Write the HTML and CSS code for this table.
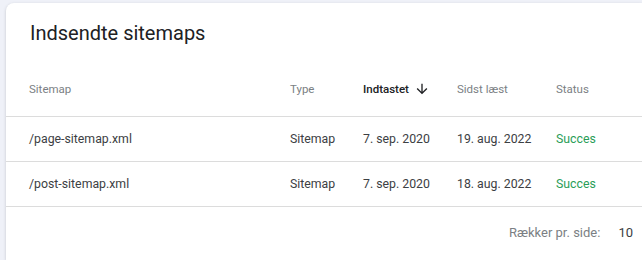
FILE: index.html
```html
<!DOCTYPE html>
<html lang="da">
    <head>
        <meta charset="UTF-8">
        <title>Indsendte sitemaps</title>
        <link rel="stylesheet" href="styles.css">
    </head>
    <body>
        <div class="card">
            <h2 class="card-title">Indsendte sitemaps</h2>
            <div class="row head">
                <div>Sitemap</div>
                <div>Type</div>
                <div class="sorted">Indtastet
                    <svg class="sort-icon" viewBox="0 0 24 24" width="16" height="16"><path d="M20 12l-1.41-1.41L13 16.17V4h-2v12.17l-5.58-5.59L4 12l8 8 8-8z"/></svg>
                </div>
                <div>Sidst læst</div>
                <div>Status</div>
            </div>
            <div class="row">
                <div>/page-sitemap.xml</div>
                <div>Sitemap</div>
                <div>7. sep. 2020</div>
                <div>19. aug. 2022</div>
                <div class="ok">Succes</div>
            </div>
            <div class="row">
                <div>/post-sitemap.xml</div>
                <div>Sitemap</div>
                <div>7. sep. 2020</div>
                <div>18. aug. 2022</div>
                <div class="ok">Succes</div>
            </div>
            <div class="pager">
                <span class="pager-label">Rækker pr. side:</span>
                <span class="pager-value">10</span>
            </div>
        </div>
    </body>
</html>
```

FILE: styles.css
```css
body {
    margin: 0;
    padding: 3px 0 0 6px;
    background-color: #eff1f8;
    font-family: Roboto, "Liberation Sans", sans-serif;
    overflow: hidden;
    height: 257px;
}
.card {
    background-color: #fff;
    border-radius: 8px 0 0 0;
    box-shadow: 0 1px 3px rgba(60, 64, 67, 0.25);
    height: 257px;
}
.card-title {
    margin: 0;
    padding: 16px 24px 0;
    font-size: 20px;
    font-weight: 400;
    line-height: 28px;
    color: #202124;
}
.row {
    display: grid;
    grid-template-columns: 261px 73px 94px 99px 1fr;
    align-items: center;
    height: 44px;
    padding-left: 23px;
    border-bottom: 1px solid #dcdcdc;
    font-size: 12.3px;
    color: #3c4043;
}
.row.head {
    align-items: end;
    height: 52px;
    padding-bottom: 17px;
    font-size: 11.5px;
    line-height: 20px;
    color: #7b7f84;
}
.sorted {
    display: flex;
    align-items: center;
    color: #202124;
    font-weight: 500;
}
.sort-icon {
    margin-left: 5px;
    fill: #202124;
}
.ok {
    color: #2a9d57;
}
.pager {
    display: flex;
    justify-content: flex-end;
    align-items: center;
    padding: 16px 9px 0 0;
    line-height: 20px;
    font-size: 13px;
}
.pager-label {
    color: #7b7f84;
}
.pager-value {
    margin-left: 18px;
    color: #3c4043;
}
```
